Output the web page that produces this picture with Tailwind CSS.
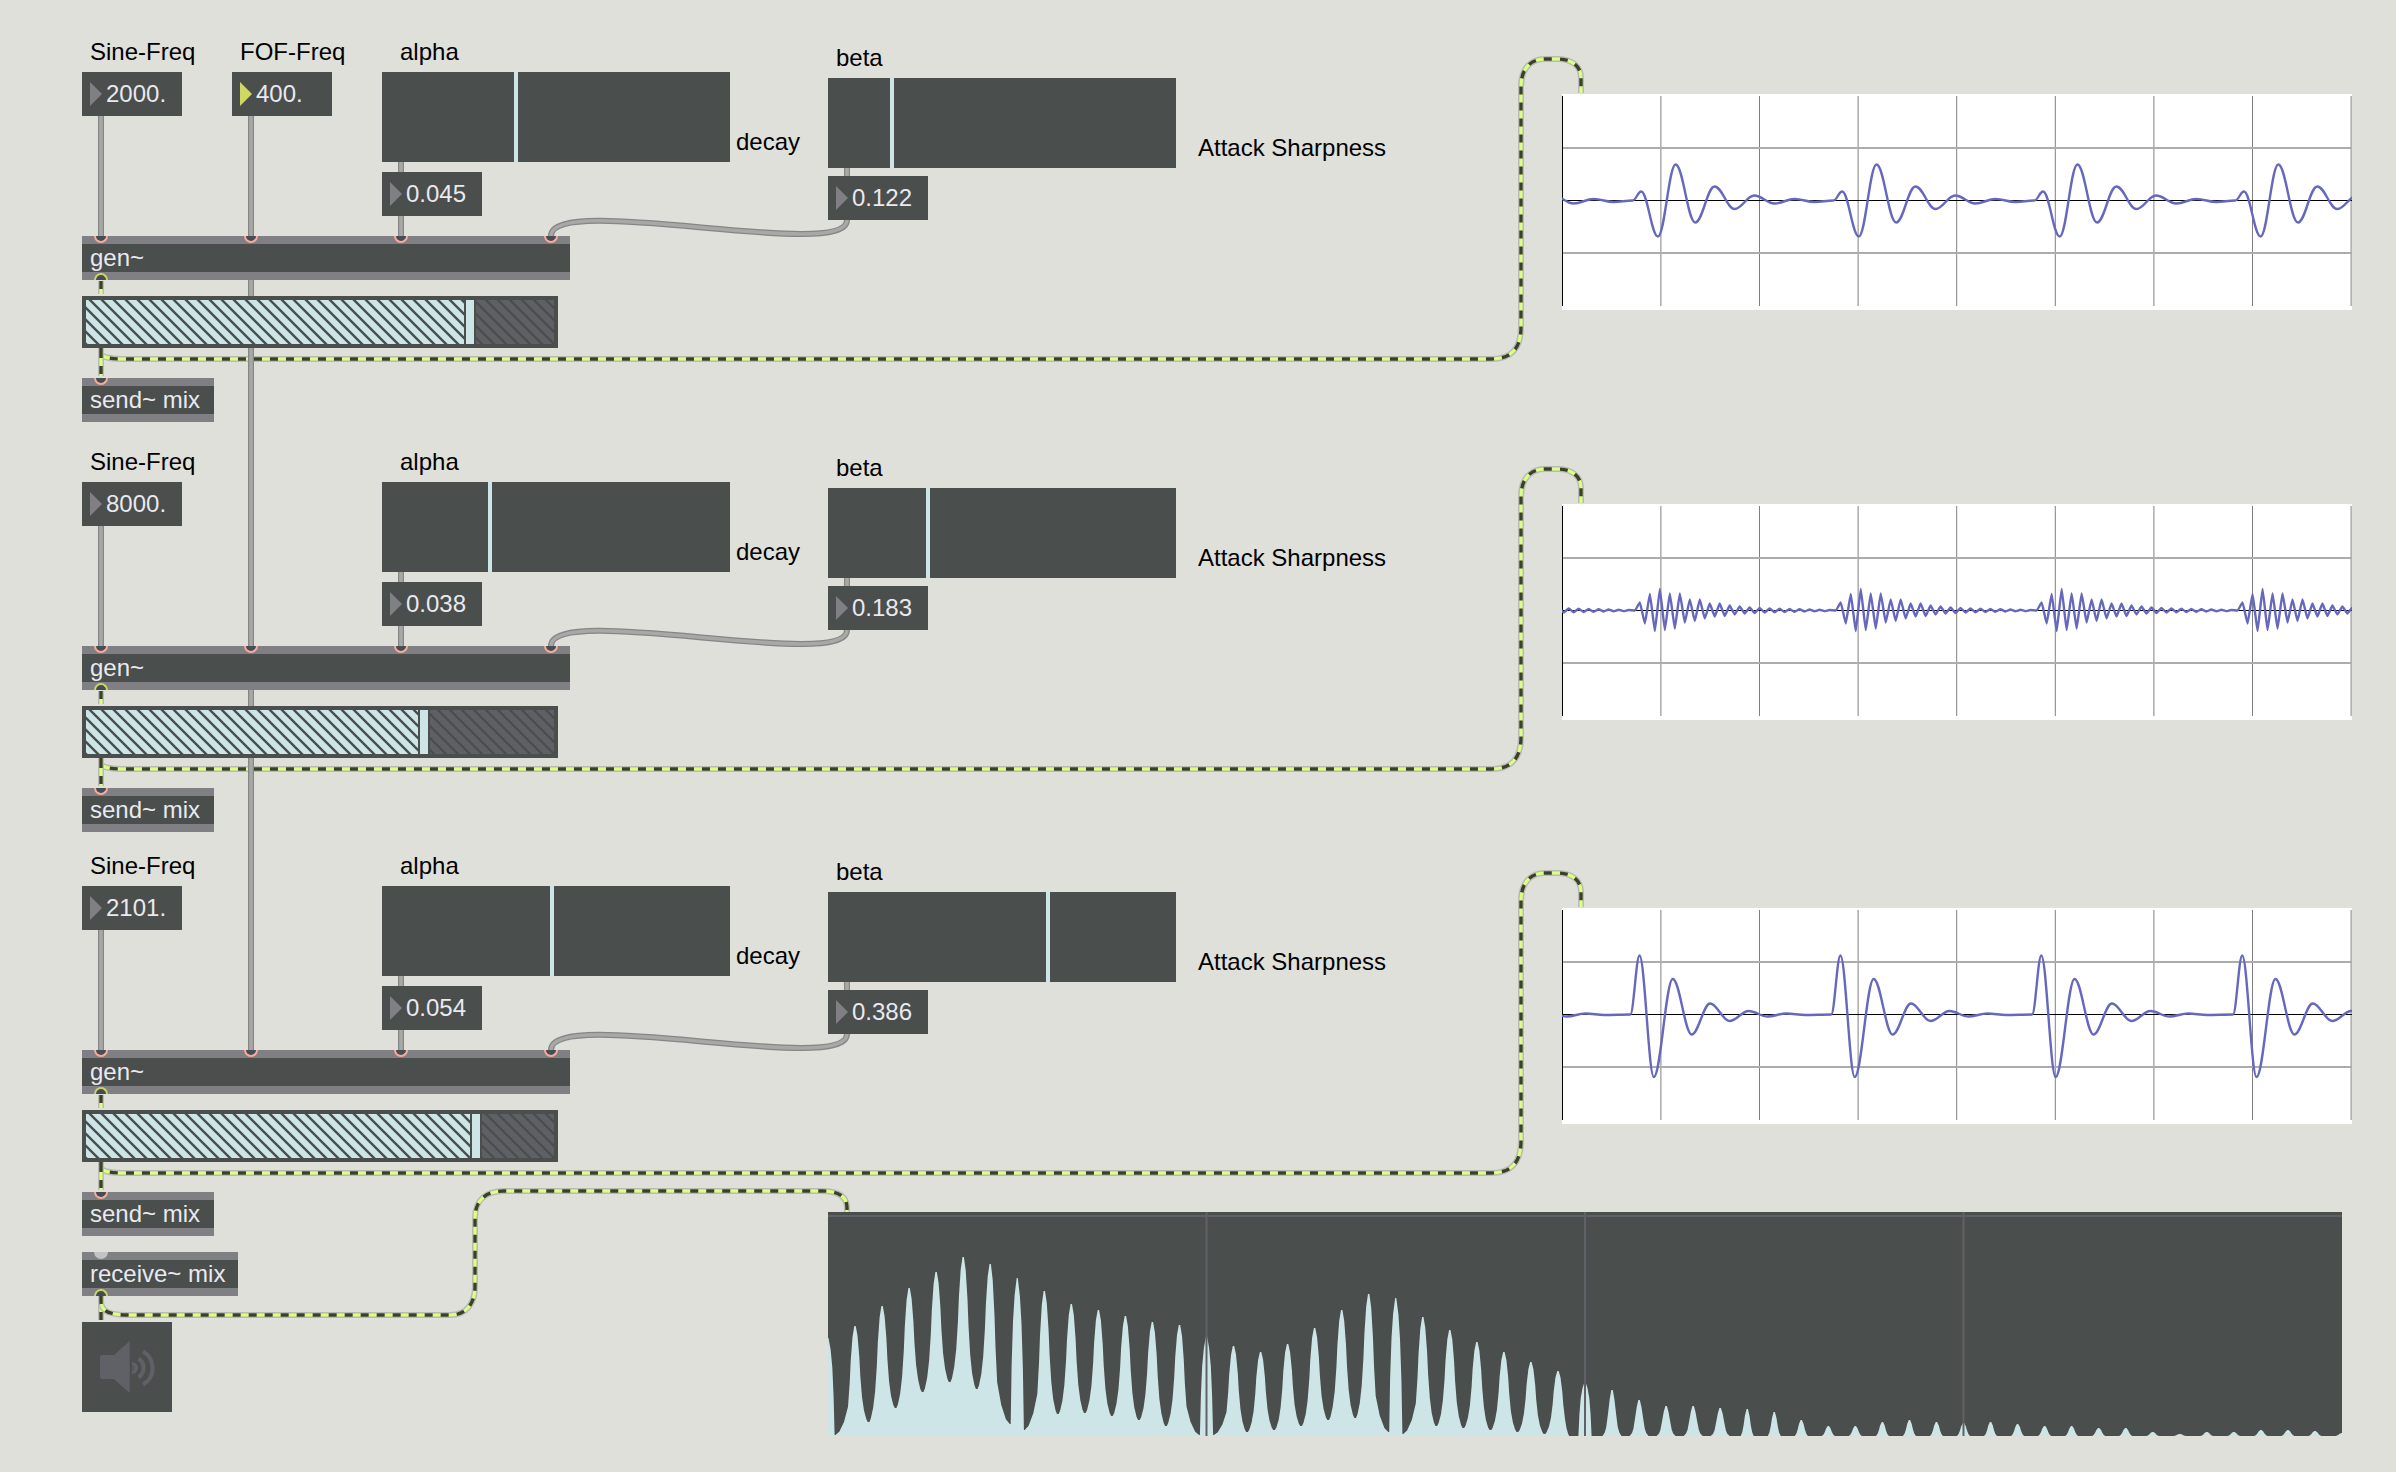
<!DOCTYPE html>
<html lang="en">
<head>
<meta charset="utf-8">
<title>FOF synthesis patch</title>
<script src="https://cdn.jsdelivr.net/npm/@tailwindcss/browser@4"></script>
</head>
<body class="min-h-screen bg-[#dfe0da] text-2xl leading-7 text-black font-['Liberation_Sans',Arial,sans-serif]">
<main class="relative w-full overflow-hidden">
  <svg id="cords" class="absolute inset-0 h-full w-full" fill="none" aria-hidden="true"></svg>
  <div id="voices"></div>

  <section class="relative h-[268px]" aria-label="Output">
    <div class="absolute left-[82px] top-12 h-11 w-[156px] border-y-8 border-[#7f7f84] bg-[#4a4e4c] pl-2 text-[#e9e9ef]">receive~ mix
      <span class="absolute -top-2 left-3 h-[7px] w-[14px] rounded-b-full bg-[#c3c3c5]"></span>
      <span class="absolute -bottom-2 left-3 h-[7px] w-[14px] rounded-t-full border-2 border-b-0 border-[#cdd467] bg-[#444e50]"></span>
    </div>
    <button type="button" aria-label="Audio on/off" class="absolute left-[82px] top-[118px] size-[90px] bg-[#4a4e4c]">
      <svg viewBox="0 0 90 90" class="size-full" fill="none" stroke="#606166">
        <path d="M20 33H32L47.700 19V71L32 57H20Q18 57 18 55V35Q18 33 20 33Z" fill="#606166" stroke="none"/>
        <path d="M61 29.500A19 19 0 0 1 61 62.500M56.500 36.500A11.500 11.500 0 0 1 56.500 55.500" stroke-width="4"/>
        <path d="M50 40A6 6 0 0 1 50 52Z" fill="#606166" stroke="none"/>
        <path d="M50 44A2 2 0 0 1 50 48" stroke="#4a4e4c" stroke-width="1"/>
      </svg>
    </button>
    <svg id="spectrum" class="absolute left-[828px] top-2 h-[224px] w-[1514px] bg-[#4a4e4c]" viewBox="0 0 1514 224" role="img" aria-label="Spectrum"></svg>
  </section>
</main>

<script>
const voices = [
  { height: 'h-[410px]', top: 0, freq: '2000.', fof: '400.', alpha: '0.045', a: 132, beta: '0.122', b: 62, gain: 378, wave: 'sine' },
  { height: 'h-[404px]', top: 410, freq: '8000.', alpha: '0.038', a: 106, beta: '0.183', b: 98, gain: 332, wave: 'high' },
  { height: 'h-[390px]', top: 814, freq: '2101.', alpha: '0.054', a: 168, beta: '0.386', b: 218, gain: 384, wave: 'sharp' },
];

// One period of each waveform: [x offset, amplitude] at its turning points.
const high = [0,8,-13,16.5,-20.5,21.5,-19.5,17,-18,17,-12,11,-10.5,11,-8,7,-6,7,-5.5,5,-4,4,-3,3,-2.5,2.5,-2,2,-1.8,1.8,-1.5,1.5,-1.3,1.2,-1,1,-.8,.7,-.6,.5];
const waves = {
  sine: { start: 70.6, ease: .38, pts: [[0,0],[8.6,9],[25.3,-36],[43,36],[62.6,-22],[82,14],[102,-8.5],[121.7,5],[141.8,-3],[162,1.5],[182,-1.5]] },
  high: { start: 72.9, ease: .1, pts: high.map((v, i) => [i * 4.99, v]) },
  sharp: { start: 68.3, ease: .36, pts: [[0,0],[9.2,59],[23.5,-62.5],[42.5,35.5],[61.4,-20],[79.8,11],[99.3,-6.5],[118.3,3.5],[137.2,-2],[156.1,1],[175,-.5]] },
};
const PERIOD = 200.9;

function wavePath({ start, ease, pts }) {
  const all = [];
  for (let c = -1; c < 4; c++) for (const [x, v] of pts) all.push([start + c * PERIOD + x, 106.5 - v]);
  let d = `M${all[0][0]} ${all[0][1]}`;
  for (let i = 1; i < all.length; i++) {
    const [x0, y0] = all[i - 1], [x1, y1] = all[i], k = (x1 - x0) * ease;
    d += `C${x0 + k} ${y0} ${x1 - k} ${y1} ${x1} ${y1}`;
  }
  return d;
}

function scope(name) {
  let g = '';
  for (let i = 1; i <= 8; i++) g += `<path d="M${i * 98.6 + .3} 2V212" stroke="#808080"/>`;
  return `<svg class="absolute left-[1562px] top-[94px] h-[216px] w-[790px] bg-white" viewBox="0 0 790 216" fill="none" role="img" aria-label="Waveform">
    ${g}<path d="M0 54H790M0 159H790" stroke="#acacac" stroke-width="2"/>
    <path d="M.5 2V212M0 106.5H790" stroke="#000"/>
    <path d="${wavePath(waves[name])}" stroke="#6668bd" stroke-width="2.400" stroke-linejoin="round"/></svg>`;
}

const numberBox = (pos, label, value, color = '#7f7f84') => `
  <div class="absolute ${pos} h-11 w-[100px]">
    <input type="text" value="${value}" aria-label="${label}" class="block size-full bg-[#4a4e4c] pl-6 text-[#e9e9ef] outline-none">
    <svg class="absolute left-2 top-2.5 h-6 w-3" viewBox="0 0 12 24"><path d="M0 0L12 12L0 24Z" fill="${color}"/></svg>
  </div>`;

const slider = (pos, id, value) => `
  <input id="${id}" type="range" min="0" max="344" value="${value}" class="absolute ${pos} m-0 h-[90px] w-[348px] appearance-none bg-[#4a4e4c] [&::-webkit-slider-thumb]:h-[90px] [&::-webkit-slider-thumb]:w-1 [&::-webkit-slider-thumb]:appearance-none [&::-webkit-slider-thumb]:bg-[#cde5e7]">`;

const inlet = (pos) => `<span class="absolute -top-2 ${pos} h-[7px] w-[14px] rounded-b-full border-2 border-t-0 border-[#f8aa9c] bg-[#444e54]"></span>`;

document.getElementById('voices').innerHTML = voices.map((v, i) => `
  <section class="relative ${v.height}" aria-label="Voice ${i + 1}">
    <span class="absolute left-[90px] top-[38px]">Sine-Freq</span>
    ${numberBox('left-[82px] top-[72px]', 'Sine-Freq', v.freq)}
    ${v.fof ? `<span class="absolute left-[240px] top-[38px]">FOF-Freq</span>${numberBox('left-[232px] top-[72px]', 'FOF-Freq', v.fof, '#cfd961')}` : ''}
    <label for="alpha${i}" class="absolute left-[400px] top-[38px]">alpha</label>
    ${slider('left-[382px] top-[72px]', 'alpha' + i, v.a)}
    <span class="absolute left-[736px] top-32">decay</span>
    ${numberBox('left-[382px] top-[172px]', 'alpha value', v.alpha)}
    <label for="beta${i}" class="absolute left-[836px] top-11">beta</label>
    ${slider('left-[828px] top-[78px]', 'beta' + i, v.b)}
    <span class="absolute left-[1198px] top-[134px]">Attack Sharpness</span>
    ${numberBox('left-[828px] top-[176px]', 'beta value', v.beta)}
    <div class="absolute left-[82px] top-[236px] h-11 w-[488px] border-y-8 border-[#7f7f84] bg-[#4a4e4c] pl-2 text-[#e9e9ef]">gen~
      ${inlet('left-3')}${inlet('left-[162px]')}${inlet('left-[312px]')}${inlet('left-[462px]')}
      <span class="absolute -bottom-2 left-3 h-[7px] w-[14px] rounded-t-full border-2 border-b-0 border-[#cdd467] bg-[#444e50]"></span>
    </div>
    <div class="absolute left-[82px] top-[296px] h-[52px] w-[476px] border-4 border-[#4a4e4c] bg-[#5f6065]">
      <svg class="absolute inset-0 size-full" aria-hidden="true">
        <defs><pattern id="hatch${i}" x="4" width="12" height="12" patternUnits="userSpaceOnUse"><path d="M-6 -6L18 18M-6 6L6 18M6 -6L18 6" stroke="#4a4e4c" stroke-width="2.400"/></pattern></defs>
        <rect width="${v.gain}" height="44" fill="#cde5e7"/><rect width="468" height="44" fill="url(#hatch${i})"/>
      </svg>
      <input type="range" min="0" max="456" value="${v.gain}" aria-label="Gain" class="absolute inset-0 m-0 size-full appearance-none bg-transparent [&::-webkit-slider-thumb]:box-border [&::-webkit-slider-thumb]:h-11 [&::-webkit-slider-thumb]:w-3 [&::-webkit-slider-thumb]:appearance-none [&::-webkit-slider-thumb]:border-x-2 [&::-webkit-slider-thumb]:border-y-0 [&::-webkit-slider-thumb]:border-solid [&::-webkit-slider-thumb]:border-[#4a4e4c] [&::-webkit-slider-thumb]:bg-[#cde5e7]">
    </div>
    <div class="absolute left-[82px] top-[378px] h-11 w-[132px] border-y-8 border-[#7f7f84] bg-[#4a4e4c] pl-2 text-[#e9e9ef]">send~ mix${inlet('left-3')}</div>
    ${scope(v.wave)}
  </section>`).join('');

// Patch cords
const signal = d => `<path d="${d}" stroke="#b9bbb2" stroke-width="6"/><path d="${d}" stroke="#dbff80" stroke-width="3"/><path d="${d}" stroke="#3b402c" stroke-width="3.400" stroke-dasharray="8 8"/>`;
const control = d => `<path d="${d}" stroke="#868686" stroke-width="6"/><path d="${d}" stroke="#a8a8a7" stroke-width="3.500"/>`;
let cords = '';
for (const { top } of voices) {
  cords += `<g transform="translate(0 ${top})">`
    + signal('M101 281V294') + signal('M101 348V353C101 357 110 359 122 359H1491C1511 359 1521 349 1521 327V87C1521 68 1531 59 1545 59H1557C1572 59 1581 66 1581 78V93') + signal('M101 350V376')
    + control('M101 116V236') + control('M401 162V236') + control('M847 168V176') + control('M847 220C847 262 551 192 551 236') + '</g>';
}
cords += signal('M101 1296V1320') + signal('M101 1296V1301C101 1312 110 1315 130 1315H450C467 1315 475 1303 475 1286V1218C475 1201 485 1191 504 1191H822C839 1191 847 1197 847 1208V1212');
cords += control('M251 116V1050');
document.getElementById('cords').innerHTML = cords;

// Spectrum: partial heights and the low points between neighbouring partials
const STEP = 27.036, FLOOR = 224;
const peaks = [126,114,94,76,60,45,52,66,79,92,98,104,110,113,124,134,140,132,116,98,82,86,105,118,130,140,150,159,170,178,188,194,194,196,197,200,208,214,214,210,208,210,211,210,212,214,214,216,216,220,222,220,220,218,218,219,221];
const dips = [223,210,196,180,170,177,212,218,202,201,204,208,214,223,223,220,218,214,208,206,220,222,214,216,218,220,222];
const narrow = new Set([0, 7, 14, 21, 28]);
function flank(k, dir, y1) {
  const y0 = peaks[k], tail = k > 28;
  let w = 13.5;
  if (tail) w = k < 34 ? 9.5 : 6.5;
  else if (narrow.has(k)) w = 6.6;
  else if (narrow.has(k + dir)) w = k === 27 ? 12 : 20.4;
  let shape;
  if (tail && w < 7) shape = [[.1, 0], [.35, .25], [.55, .6], [.75, .85], [1, 1]];
  else if (tail) shape = [[.08, 0], [.25, .2], [.42, .5], [.6, .8], [.75, .92], [1, 1]];
  else if (w < 7) shape = [[.08, 0], [.4, .12], [.65, .3], [.85, .6], [1, 1]];
  else shape = [[.7 / w, 0], [2.5 / w, .1], [4.3 / w, .32], [5.3 / w, .52], [7 / w, .74], [(7 + (w - 7) * .3) / w, .88], [(7 + (w - 7) * .65) / w, .97], [(w - .8) / w, 1], [1, 1]];
  const pts = shape.map(([x, y]) => [k * STEP + dir * x * w, y0 + (y1 - y0) * y]);
  return dir < 0 ? pts.reverse() : pts;
}
const outline = [[0, FLOOR]];
peaks.forEach((_, k) => {
  if (k) outline.push(...flank(k, -1, dips[k - 1] ?? FLOOR));
  else outline.push([0, peaks[0]]);
  outline.push(...flank(k, 1, dips[k] ?? FLOOR));
});
outline.push([1514, FLOOR]);
document.getElementById('spectrum').innerHTML =
  `<path d="M0 4H1514" stroke="#606166" stroke-width="2"/><path d="M${outline.map(p => p[0].toFixed(1) + ' ' + p[1].toFixed(1)).join('L')}Z" fill="#cde5e7"/>`
  + [1, 2, 3].map(n => `<path d="M${n * 378.5} 0V224" stroke="#606166" stroke-width="2"/>`).join('');
</script>
</body>
</html>
